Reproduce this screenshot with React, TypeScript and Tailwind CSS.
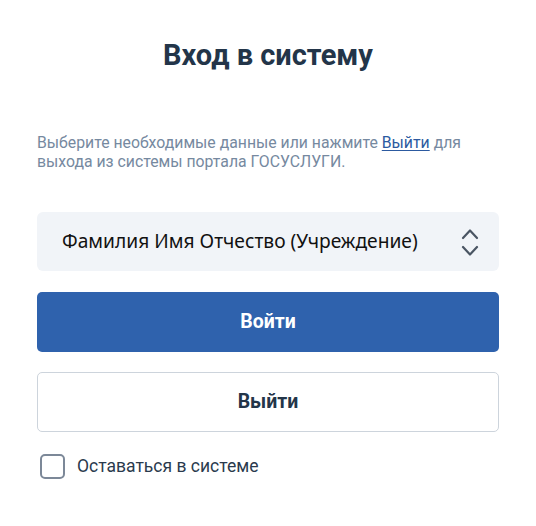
import React from "react";

export default function App() {
  return (
    <div className="w-[536px] h-[526px] bg-white" style={{ fontFamily: "Roboto, 'Noto Sans', sans-serif" }}>
      <div className="px-[37px] pt-[36px] w-[536px]">
        <h1 className="text-center text-[29px] leading-[38px] font-bold text-[#233549]">Вход в систему</h1>
        <p className="mt-[59px] text-[15.8px] leading-[19px] text-[#7689a0]">
          Выберите необходимые данные или нажмите{" "}
          <a href="#" className="text-[#2c5aa0] underline underline-offset-2">Выйти</a> для выхода из системы портала ГОСУСЛУГИ.
        </p>
        <div className="mt-[41px] h-[59px] rounded-[6px] bg-[#f1f4f8] flex items-center pl-[25px] pr-[20px]">
          <span className="flex-1 text-[19.2px] text-[#111]" style={{ fontFamily: "'Noto Sans', 'Open Sans', sans-serif" }}>
            Фамилия Имя Отчество (Учреждение)
          </span>
          <svg width="18" height="30" viewBox="0 0 18 30" fill="none" stroke="#4a5563" strokeWidth="2.2" strokeLinecap="round" strokeLinejoin="round">
            <path d="M2 11 L9 3.5 L16 11" />
            <path d="M2 20 L9 27.5 L16 20" />
          </svg>
        </div>
        <button className="mt-[21px] w-full h-[60px] rounded-[5px] bg-[#2f62ad] text-white text-[19.5px] font-bold">Войти</button>
        <button className="mt-[20px] w-full h-[60px] rounded-[5px] bg-white border border-[#cdd4dc] text-[#233549] text-[19.5px] font-bold">Выйти</button>
        <label className="mt-[21px] flex items-center gap-[12px] pl-[3px]">
          <span className="w-[25px] h-[25px] rounded-[5px] border-2 border-[#7c8898] bg-white" />
          <span className="text-[17.5px] text-[#2a3a4d]">Оставаться в системе</span>
        </label>
      </div>
    </div>
  );
}
